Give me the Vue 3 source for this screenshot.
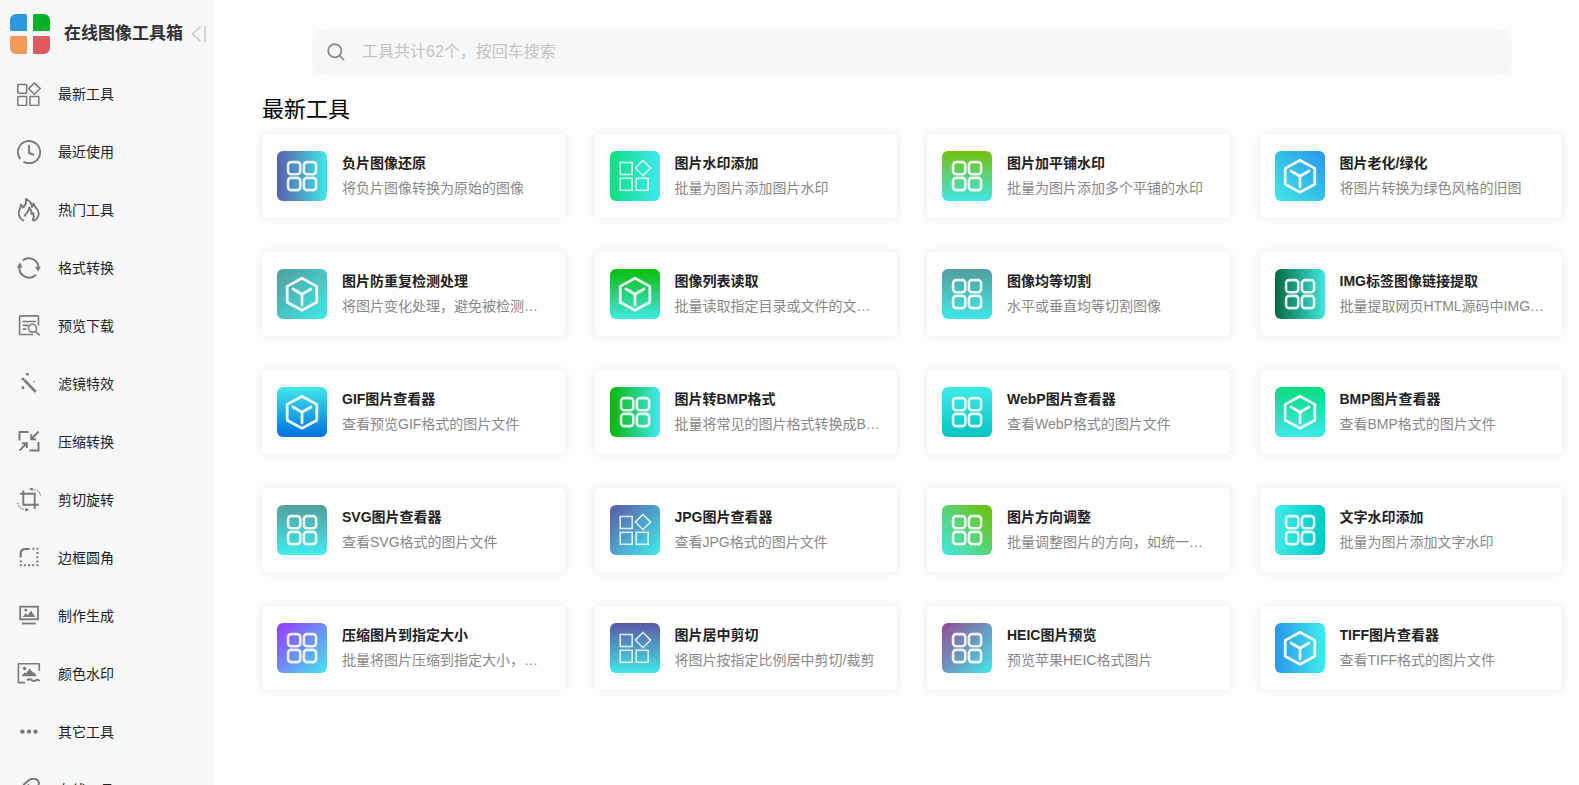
<template>
  <div class="layout">
    <!-- Shared icon shapes -->
    <svg class="sprite" aria-hidden="true">
      <symbol id="icon-new" viewBox="0 0 24 24">
        <g fill="none" stroke="currentColor" stroke-width="1.5">
          <rect x="0.8" y="2.4" width="8.8" height="8.8" rx="0.6" />
          <rect x="0.8" y="14.6" width="8.8" height="8.8" rx="0.6" />
          <rect x="13" y="14.6" width="8.8" height="8.8" rx="0.6" />
          <path d="M17.4 0.9l5.8 5.7-5.8 5.7-5.8-5.7z" />
        </g>
      </symbol>
      <symbol id="icon-recent" viewBox="0 0 24 24">
        <g fill="none" stroke="currentColor" stroke-width="1.9">
          <path d="M6.5 21.7A11.1 11.1 0 1 0 3.2 18.8" />
          <path d="M12 5v8l5 2" />
        </g>
      </symbol>
      <symbol id="icon-hot" viewBox="0 0 24 24">
        <g fill="none" stroke="currentColor" stroke-width="1.9" stroke-linejoin="round">
          <path d="M7 23C3.2 21 1.5 18 1.8 14.5 2 11.5 3.8 10 4 6.5l2 3C8.7 7 9.6 4 8.8 0.9c4 1.8 6 4.8 6.2 8.1l1.5-3.5c0.3 1.8 1 3 2.5 4.3 2 2 2.8 3.5 2.7 5.7-0.2 3.8-2 6-5 7.500" />
          <path d="M7.500 18.500c1-3.200 4.500-4.500 4.800-9 2 2.200 2.400 4 2.300 6.500l1.600-1c1 3 0.700 5.500-0.700 8" />
        </g>
      </symbol>
      <symbol id="icon-format" viewBox="0 0 24 24">
        <g fill="none" stroke="currentColor" stroke-width="1.9">
          <path d="M5.8 4.3A9.9 9.9 0 0 1 21.6 11" />
          <path d="M2.3 11A9.9 9.9 0 0 0 19 18.8" />
        </g>
        <path fill="currentColor" d="M18 10.800h6l-3 4.800zM0 11.500h5.600L2.800 6.500z" />
      </symbol>
      <symbol id="icon-preview" viewBox="0 0 24 24">
        <g fill="none" stroke="currentColor" stroke-width="1.6">
          <path d="M21.500 11.500V2.700q0-0.800-0.800-0.800H3.400q-0.800 0-0.800 0.800v17q0 0.800 0.800 0.800H16" />
          <path d="M5.800 7.500H19M5.800 11.400h5.700M5.800 15.100h3.400" />
          <circle cx="15.500" cy="14.300" r="4" />
          <path d="M18.500 17.300l4.200 4" />
        </g>
      </symbol>
      <symbol id="icon-filter" viewBox="0 0 24 24">
        <path d="M7.300 8l11.400 11.800" stroke="currentColor" stroke-width="2.600" />
        <g fill="currentColor">
          <rect x="9" y="1.200" width="2.800" height="2.200" />
          <rect x="4.500" y="5.800" width="2.800" height="2.800" rx="1" />
          <rect x="4.500" y="14.200" width="2.800" height="2.800" rx="1" />
          <rect x="16.400" y="8.700" width="1.300" height="1.300" />
        </g>
      </symbol>
      <symbol id="icon-compress" viewBox="0 0 24 24">
        <g fill="none" stroke="currentColor" stroke-width="2">
          <path d="M2.500 10.500V2h9M21.500 12v8.400h-9" />
          <path d="M21.500 1.800L14.200 9M14.200 4.200V9.200H19" />
          <path d="M2.400 20.600L9.800 13.200M5 13.200h4.900V18" />
        </g>
      </symbol>
      <symbol id="icon-crop" viewBox="0 0 24 24">
        <g fill="none" stroke="currentColor" stroke-width="1.9">
          <path d="M3 5.700h14.700V21M6.300 2.400v14.300H21.800" />
          <path d="M15 1.200c5 0 8 2.300 8.600 6.400M0.700 14.800c0.600 4 3.500 6.700 8 6.900" stroke-width="1.200" stroke-dasharray="1.500 1.200" />
        </g>
        <path fill="currentColor" d="M12 1l3.600-1.900v3.800zM12.200 21.800l-3.800 2v-4z" />
      </symbol>
      <symbol id="icon-border" viewBox="0 0 24 24">
        <path fill="none" stroke="currentColor" stroke-width="2.200" d="M3.700 11.500V7.500q0-4.500 4.500-4.500h4.500" />
        <g fill="none" stroke="currentColor" stroke-width="2" stroke-dasharray="2 2.150">
          <path d="M15.300 2.800H22" />
          <path d="M20.400 6.100V18" />
          <path d="M2.800 19.300H22" />
          <path d="M3.700 14.400v2.500" />
        </g>
      </symbol>
      <symbol id="icon-make" viewBox="0 0 24 24">
        <g fill="none" stroke="currentColor" stroke-width="1.800">
          <rect x="3.200" y="2.700" width="17.800" height="12.600" />
          <path d="M5 19.500h13.700" />
        </g>
        <path fill="currentColor" d="M5.600 13L8.700 9.300l2 1.900 3.300-4.600L18.200 13z" />
        <circle cx="8.800" cy="6.100" r="1.500" fill="currentColor" />
      </symbol>
      <symbol id="icon-color" viewBox="0 0 24 24">
        <g fill="none" stroke="currentColor" stroke-width="1.600">
          <path d="M8 20.600H2q-0.600 0-0.600-0.600V2.400q0-0.600 0.600-0.600h19.700q0.600 0 0.600 0.600V9" />
          <path d="M10 18.300c2-1.600 3.500-1.300 5 0s3 1 4.500-0.200c1.200-0.700 2.400-0.200 3 1.200" stroke-width="1.900" />
        </g>
        <path fill="currentColor" d="M4.500 14.200l3.200-4 1.500 1 3.300-4.700 3.500 4.300 1.200-0.600 2.400 4z" />
        <circle cx="7.600" cy="6.500" r="1.700" fill="currentColor" />
      </symbol>
      <symbol id="icon-other" viewBox="0 0 24 24">
        <g fill="currentColor">
          <circle cx="5.400" cy="11.600" r="2.200" />
          <circle cx="12" cy="11.600" r="2.200" />
          <circle cx="18.500" cy="11.600" r="2.200" />
        </g>
      </symbol>
      <symbol id="icon-link" viewBox="0 0 24 24">
        <g fill="none" stroke="currentColor" stroke-width="1.900" stroke-linecap="round">
          <path d="M8 13C4.500 12 5 8.500 7.500 6l4-3.500C15-0.500 20 0.500 21.500 3.500c1 2.500 0 4.500-2 6.500L16 13" />
          <path d="M10 10.500c-0.500-1.500 0-2.500 1.500-3.500" />
        </g>
      </symbol>

      <symbol id="tool-grid" viewBox="0 0 50 50">
        <g fill="none" stroke="#fff" stroke-opacity="0.88" stroke-width="2.600">
          <rect x="11.100" y="11.100" width="12.200" height="12.200" rx="3" />
          <rect x="26.900" y="11.100" width="12.200" height="12.200" rx="3" />
          <rect x="11.100" y="26.900" width="12.200" height="12.200" rx="3" />
          <rect x="26.900" y="26.900" width="12.200" height="12.200" rx="3" />
        </g>
      </symbol>
      <symbol id="tool-shapes" viewBox="0 0 50 50">
        <g fill="none" stroke="#fff" stroke-opacity="0.8" stroke-width="1.600">
          <rect x="10.200" y="11.500" width="12" height="12" />
          <rect x="10.200" y="27.300" width="12" height="12" />
          <rect x="26.200" y="27.300" width="12" height="12" />
          <path d="M33 9.500l7.600 7.600-7.600 7.600-7.600-7.600z" />
        </g>
      </symbol>
      <symbol id="tool-cube" viewBox="0 0 50 50">
        <g fill="none" stroke="#fff" stroke-opacity="0.92" stroke-width="2.800" stroke-linejoin="round" stroke-linecap="round">
          <path d="M25 9.200l14.800 8.200v15.800L25 41.200l-14.800-8V17.400z" />
          <path d="M16 20l9 5.300 9-5.300M25 25.300V36" />
        </g>
      </symbol>
    </svg>

    <aside class="sidebar">
      <div class="brand">
        <svg class="logo" viewBox="0 0 40 40" aria-hidden="true">
          <path fill="#2d98df" d="M6 0h9.500q1.500 0 1.500 1.500V17H1.500Q0 17 0 15.500V6a6 6 0 0 1 6-6z" />
          <path fill="#00b026" d="M24.500 0H34a6 6 0 0 1 6 6v9.500q0 1.500-1.500 1.500H23V1.500Q23 0 24.500 0z" />
          <path fill="#f49a5b" d="M1.500 22H17v16.500q0 1.500-1.500 1.500H6a6 6 0 0 1-6-6V23.500Q0 22 1.500 22z" />
          <path fill="#e05b5e" d="M23 22h15.500q1.500 0 1.500 1.500V34a6 6 0 0 1-6 6h-9.500q-1.500 0-1.500-1.500z" />
        </svg>
        <h1 class="brand-name">在线图像工具箱</h1>
        <button class="collapse" type="button" aria-label="收起菜单">
          <svg viewBox="0 0 16 16" fill="none" stroke="currentColor" stroke-width="1.8">
            <path d="M9.500 0.500L1.500 8l8 7.500M14 0v16" />
          </svg>
        </button>
      </div>

      <nav class="menu">
        <a v-for="item in menu" :key="item.icon" class="menu-item" href="#">
          <svg class="menu-icon" aria-hidden="true"><use :href="'#icon-' + item.icon" /></svg>
          <span>{{ item.name }}</span>
        </a>
      </nav>
    </aside>

    <main class="content">
      <label class="search">
        <svg class="search-icon" viewBox="0 0 18 18" fill="none" stroke="currentColor" stroke-width="1.7" aria-hidden="true">
          <circle cx="7.800" cy="7.800" r="6.600" />
          <path d="M12.500 12.500l4.500 4.500" />
        </svg>
        <input v-model="keyword" type="text" aria-label="搜索工具" placeholder="工具共计62个，按回车搜索">
      </label>

      <h2 class="section-title">最新工具</h2>

      <div class="tools">
        <a v-for="tool in tools" :key="tool.name" class="tool" href="#">
          <svg class="tool-icon" :style="{ backgroundImage: `linear-gradient(${tool.bg})` }" aria-hidden="true">
            <use :href="'#tool-' + tool.icon" />
          </svg>
          <div class="tool-text">
            <h3>{{ tool.name }}</h3>
            <p>{{ tool.desc }}</p>
          </div>
        </a>
      </div>
    </main>
  </div>
</template>

<script setup>
import { ref } from 'vue'

const keyword = ref('')

const menu = [
  { icon: 'new', name: '最新工具' },
  { icon: 'recent', name: '最近使用' },
  { icon: 'hot', name: '热门工具' },
  { icon: 'format', name: '格式转换' },
  { icon: 'preview', name: '预览下载' },
  { icon: 'filter', name: '滤镜特效' },
  { icon: 'compress', name: '压缩转换' },
  { icon: 'crop', name: '剪切旋转' },
  { icon: 'border', name: '边框圆角' },
  { icon: 'make', name: '制作生成' },
  { icon: 'color', name: '颜色水印' },
  { icon: 'other', name: '其它工具' },
  { icon: 'link', name: '在线工具' }
]

const tools = [
  { icon: 'grid', bg: 'to right, #5a5db0, #40e8e6', name: '负片图像还原', desc: '将负片图像转换为原始的图像' },
  { icon: 'shapes', bg: 'to right, #0be080, #40e8f0', name: '图片水印添加', desc: '批量为图片添加图片水印' },
  { icon: 'grid', bg: 'to bottom, #75c00a, #40e8e6', name: '图片加平铺水印', desc: '批量为图片添加多个平铺的水印' },
  { icon: 'cube', bg: 'to bottom left, #2a96ec, #40e8e6', name: '图片老化/绿化', desc: '将图片转换为绿色风格的旧图' },
  { icon: 'cube', bg: 'to bottom right, #529e9e, #40e8e8', name: '图片防重复检测处理', desc: '将图片变化处理，避免被检测为重复图片' },
  { icon: 'cube', bg: 'to bottom, #08bf08, #40e8e6', name: '图像列表读取', desc: '批量读取指定目录或文件的文件列表' },
  { icon: 'grid', bg: 'to bottom, #529e9e, #40e8e8', name: '图像均等切割', desc: '水平或垂直均等切割图像' },
  { icon: 'grid', bg: 'to right, #046a40, #40e8e0', name: 'IMG标签图像链接提取', desc: '批量提取网页HTML源码中IMG标签的图像链接' },
  { icon: 'cube', bg: 'to bottom, #40e8ec, #0070e0', name: 'GIF图片查看器', desc: '查看预览GIF格式的图片文件' },
  { icon: 'grid', bg: 'to right, #08b808, #40e8f0', name: '图片转BMP格式', desc: '批量将常见的图片格式转换成BMP格式' },
  { icon: 'grid', bg: 'to bottom, #40ecea, #00c4c4', name: 'WebP图片查看器', desc: '查看WebP格式的图片文件' },
  { icon: 'cube', bg: 'to bottom, #06dc80, #40e8ea', name: 'BMP图片查看器', desc: '查看BMP格式的图片文件' },
  { icon: 'grid', bg: 'to bottom, #529e9e, #40ecec', name: 'SVG图片查看器', desc: '查看SVG格式的图片文件' },
  { icon: 'shapes', bg: 'to bottom right, #5a58a8, #40ecec', name: 'JPG图片查看器', desc: '查看JPG格式的图片文件' },
  { icon: 'grid', bg: 'to bottom left, #70c000, #40e8e6', name: '图片方向调整', desc: '批量调整图片的方向，如统一为横向或纵向' },
  { icon: 'grid', bg: 'to right, #40ecea, #00c8c8', name: '文字水印添加', desc: '批量为图片添加文字水印' },
  { icon: 'grid', bg: 'to bottom right, #9a35ff, #40e8ec', name: '压缩图片到指定大小', desc: '批量将图片压缩到指定大小，支持多种格式' },
  { icon: 'shapes', bg: 'to bottom, #5a58a8, #40e8e8', name: '图片居中剪切', desc: '将图片按指定比例居中剪切/裁剪' },
  { icon: 'grid', bg: 'to bottom right, #964a96, #40e8e8', name: 'HEIC图片预览', desc: '预览苹果HEIC格式图片' },
  { icon: 'cube', bg: 'to right, #2a96ec, #40eceb', name: 'TIFF图片查看器', desc: '查看TIFF格式的图片文件' }
]
</script>

<style>
body {
  margin: 0;
  background: #fdfdfd;
}
</style>

<style scoped>
.layout {
  display: flex;
  height: 100vh;
  overflow: hidden;
  font-family: "Liberation Sans", "Noto Sans CJK SC", sans-serif;
  font-size: 14px;
  color: #222;
}

.sprite {
  position: absolute;
  width: 0;
  height: 0;
}

h1,
h2,
h3,
p {
  margin: 0;
}

a {
  color: inherit;
  text-decoration: none;
}

/* Sidebar */
.sidebar {
  flex: none;
  width: 215px;
  overflow: hidden;
  background: #f5f7f9;
}

.brand {
  display: flex;
  align-items: center;
  padding: 14px 8px 11px 10px;
}

.logo {
  flex: none;
  width: 40px;
  height: 40px;
}

.brand-name {
  margin-left: 14px;
  color: #303133;
  font-size: 17px;
  line-height: 24px;
  white-space: nowrap;
}

.collapse {
  display: flex;
  margin-left: 8px;
  padding: 0;
  border: none;
  background: none;
  color: #d0d0d0;
  cursor: pointer;
}

.collapse svg {
  width: 16px;
  height: 16px;
}

.menu-item {
  display: flex;
  align-items: center;
  gap: 17px;
  height: 58px;
  padding-left: 17px;
}

.menu-item span {
  line-height: 20px;
}

.menu-icon {
  width: 24px;
  height: 24px;
  overflow: visible;
  color: #7a7a7a;
}

/* Content */
.content {
  flex: 1;
  min-width: 0;
  padding: 29px 17px 0 47px;
}

.search {
  display: flex;
  align-items: center;
  gap: 17px;
  height: 46px;
  margin: 0 50px;
  padding: 0 15px;
  border-radius: 10px;
  background: #f5f7f9;
}

.search-icon {
  flex: none;
  width: 18px;
  height: 18px;
  color: #888;
}

.search input {
  flex: 1;
  min-width: 0;
  padding: 0;
  border: none;
  outline: none;
  background: none;
  color: #333;
  font-family: inherit;
  font-size: 16px;
}

.search input::placeholder {
  color: #c4c4c4;
}

.section-title {
  padding: 20px 0 9px;
  color: #000;
  font-size: 22px;
  font-weight: 400;
  line-height: 30px;
}

.tools {
  display: grid;
  grid-template-columns: repeat(4, minmax(0, 1fr));
  gap: 34px 30px;
}

.tool {
  display: flex;
  align-items: center;
  gap: 15px;
  height: 84px;
  padding: 0 15px;
  box-sizing: border-box;
  border-radius: 5px;
  background: #fff;
  box-shadow: 0 0 10px rgba(0, 0, 0, 0.08);
}

.tool-icon {
  flex: none;
  width: 50px;
  height: 50px;
  border-radius: 6px;
}

.tool-text {
  flex: 1;
  min-width: 0;
}

.tool-text h3,
.tool-text p {
  overflow: hidden;
  font-size: 14px;
  line-height: 25px;
  text-overflow: ellipsis;
  white-space: nowrap;
}

.tool-text p {
  color: #888;
}
</style>
